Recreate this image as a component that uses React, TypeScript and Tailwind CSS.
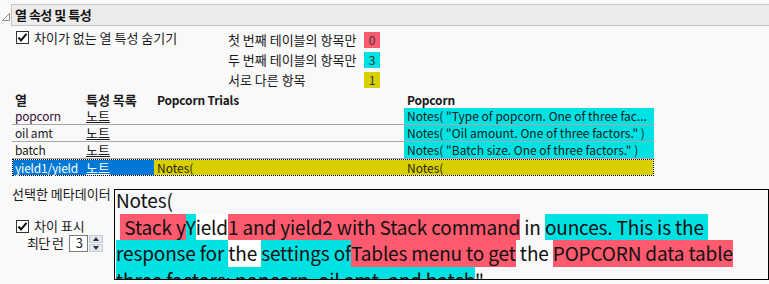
import React from "react";

const Check = () => (
  <svg width="13" height="13" viewBox="0 0 13 13" className="shrink-0">
    <rect x="0.5" y="0.5" width="12" height="12" fill="#fff" stroke="#333" />
    <path d="M2.5 6.5 L5 9.5 L10.5 2.8" fill="none" stroke="#111" strokeWidth="2" />
  </svg>
);

const R = ({ children }: { children: React.ReactNode }) => (
  <span className="inline-block bg-[#ff5a6e]">{children}</span>
);
const C = ({ children }: { children: React.ReactNode }) => (
  <span className="inline-block bg-[#00e1e3]">{children}</span>
);
const W = ({ children }: { children: React.ReactNode }) => (
  <span className="inline-block bg-white">{children}</span>
);

const Legend = ({ label, value, color }: { label: string; value: string; color: string }) => (
  <div className="flex items-center h-[20px]">
    <span className="w-[136px]">{label}</span>
    <span className={`w-[16px] h-[16px] flex items-center justify-center text-[12px] text-[#333] ${color}`}>{value}</span>
  </div>
);

const rows = [
  { col: "popcorn", note: "Notes( \"Type of popcorn. One of three fac...", cls: "text-[#3a0d3a]" },
  { col: "oil amt", note: "Notes( \"Oil amount. One of three factors.\" )", cls: "text-[#1a1a1a]" },
  { col: "batch", note: "Notes( \"Batch size. One of three factors.\" )", cls: "text-[#1a1a1a]" },
];

export default function App() {
  return (
    <div className="w-[769px] h-[284px] overflow-hidden bg-[#f9f9f9] text-[13px] text-[#1a1a1a] font-['Noto_Sans_CJK_KR','Noto_Sans',sans-serif]">
      {/* outline header */}
      <div className="flex items-end pt-[4px]">
        <svg width="10" height="10" viewBox="0 0 10 10" className="ml-[1px] mb-[4px]">
          <path d="M8.5 1.5 L8.5 8.5 L1.5 8.5 Z" fill="none" stroke="#8a8a8a" />
        </svg>
        <div className="flex-1 h-[22px] flex items-center pl-[3px] bg-[#ececec] border border-r-0 border-[#c4c4c4] text-[13px] font-bold tracking-[-0.5px] text-[#111]">
          열 속성 및 특성
        </div>
      </div>

      <div className="flex ml-[16px] mt-[4px] h-[61px]">
        <div className="w-[212px] flex items-start gap-[5px] pt-[1px]">
          <Check />
          <span className="leading-[13px]">차이가 없는 열 특성 숨기기</span>
        </div>
        <div>
          <Legend label="첫 번째 테이블의 항목만" value="0" color="bg-[#ff5a6e]" />
          <Legend label="두 번째 테이블의 항목만" value="3" color="bg-[#00e1e3]" />
          <Legend label="서로 다른 항목" value="1" color="bg-[#d8cf00]" />
        </div>
      </div>

      {/* comparison table */}
      <div className="ml-[12px] w-[642px] text-[12px]">
        <div className="flex h-[17px] items-center font-bold">
          <div className="w-[71px] pl-[3px] text-[13px]">열</div>
          <div className="w-[71px] pl-[3px] text-[13px]">특성 목록</div>
          <div className="w-[250px] pl-[3px] tracking-[-0.2px]">Popcorn Trials</div>
          <div className="w-[250px] pl-[3px] tracking-[-0.2px]">Popcorn</div>
        </div>
        {rows.map((r) => (
          <div key={r.col} className="flex h-[17px] border-b border-[#a8a8a8] leading-[16px]">
            <div className={`w-[71px] pl-[3px] tracking-[-0.2px] ${r.cls}`}>{r.col}</div>
            <div className="w-[71px] pl-[3px] text-[13px] leading-[15px] underline">노트</div>
            <div className="w-[250px]" />
            <div className="w-[250px] pl-[3px] bg-[#00e1e3] whitespace-nowrap overflow-hidden">{r.note}</div>
          </div>
        ))}
        <div className="flex h-[17px] border border-dotted border-black leading-[15px]">
          <div className="w-[70px] pl-[2px] bg-[#0078d7] text-white tracking-[-0.2px]">yield1/yield</div>
          <div className="w-[71px] pl-[3px] bg-[#0078d7] text-white text-[13px] underline">노트</div>
          <div className="w-[250px] pl-[3px] bg-[#d8cf00] text-[#2a2500]">Notes(</div>
          <div className="w-[249px] pl-[3px] bg-[#d8cf00] text-[#2a2500]">Notes(</div>
        </div>
      </div>

      {/* selected metadata */}
      <div className="flex mt-[11px]">
        <div className="w-[114px] pl-[12px] shrink-0">
          <div className="leading-[14px] whitespace-nowrap">선택한 메타데이터</div>
          <div className="flex items-center gap-[5px] pl-[4px] mt-[18px] h-[14px]">
            <Check />
            <span>차이 표시</span>
          </div>
          <div className="flex items-center pl-[15px] mt-[2px] h-[16px]">
            <span className="w-[42px] whitespace-nowrap tracking-[-0.6px]">최단 런</span>
            <div className="w-[19px] h-[17px] border border-[#7a7a7a] bg-white flex items-center justify-end pr-[4px] text-[#222]">3</div>
            <div className="ml-[1px] w-[14px] h-[17px] flex flex-col gap-[1px]">
              <div className="flex-1 flex items-center justify-center bg-[#e3e8ef] border border-[#c0cad8]">
                <svg width="6" height="4" viewBox="0 0 6 4"><path d="M0 4 L3 0 L6 4 Z" fill="#333" /></svg>
              </div>
              <div className="flex-1 flex items-center justify-center bg-[#e3e8ef] border border-[#c0cad8]">
                <svg width="6" height="4" viewBox="0 0 6 4"><path d="M0 0 L3 4 L6 0 Z" fill="#333" /></svg>
              </div>
            </div>
          </div>
        </div>
        <div className="mt-[2px] w-[655px] h-[91px] border border-black overflow-hidden pl-[1px] text-[19px] leading-[26.5px] text-[#111] whitespace-pre">
          <div className="-mt-[3px] tracking-[-0.15px]">
            <div>Notes(</div>
            <div>
              {" "}<R>{" Stack y"}</R><C>Y</C><W>ield</W><R>1 and yield2 with Stack command</R>{" in "}<C>{"ounces. This is the "}</C>
            </div>
            <div>
              <C>{"response for "}</C><W>{"the "}</W><C>settings of</C><R>Tables menu to get</R>{" the "}<R>POPCORN data table</R>
            </div>
            <div>
              <C>three factors: popcorn, oil amt, and batch</C>"
            </div>
          </div>
        </div>
      </div>
    </div>
  );
}
